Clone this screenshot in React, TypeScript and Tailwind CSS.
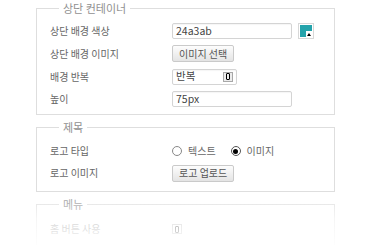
import type { ReactNode } from 'react'

const font = "font-['Noto_Sans_CJK_KR','Noto_Sans',sans-serif]"

function Group({ title, children, className = '' }: { title: string; children: ReactNode; className?: string }) {
  return (
    <fieldset className={`border border-[#dedede] pl-[13px] pr-[10px] ${className}`}>
      <legend className="ml-[9px] px-[4px] text-[11px] leading-[14px] text-[#909090]">{title}</legend>
      {children}
    </fieldset>
  )
}

function Row({ label, h, children }: { label: string; h: string; children: ReactNode }) {
  return (
    <div className={`flex items-center ${h}`}>
      <span className="w-[122px] shrink-0 text-[10px] leading-none text-[#666]">{label}</span>
      <div className="flex items-center">{children}</div>
    </div>
  )
}

function Field({ value, w, children }: { value: string; w: string; children?: ReactNode }) {
  return (
    <div
      className={`flex h-[16px] ${w} items-center justify-between rounded-[2px] border border-[#d4d4d4] bg-white pl-[3px] pr-[3px] text-[10.5px] leading-none text-[#444] shadow-[inset_0_1px_1px_rgba(0,0,0,0.04)]`}
    >
      <span>{value}</span>
      {children}
    </div>
  )
}

function Btn({ label }: { label: string }) {
  return (
    <button className="h-[17px] rounded-[2px] border border-[#cacaca] bg-gradient-to-b from-[#fdfdfd] to-[#e4e4e4] px-[6px] text-[10px] leading-none text-[#555]">
      {label}
    </button>
  )
}

// small toggle glyph: grey box with a black rounded bar inside
function Toggle({ faint = false }: { faint?: boolean }) {
  return (
    <span
      className={`flex h-[10px] w-[10px] items-center justify-center border ${
        faint ? 'border-[#aaa] bg-white' : 'border-[#a8a8a8] bg-[#ececec]'
      }`}
    >
      <span className="h-[7px] w-[4px] rounded-[1px] border-[1.5px] border-black" />
    </span>
  )
}

function Radio({ on, label }: { on?: boolean; label: string }) {
  return (
    <span className="flex items-center gap-[6px]">
      <span
        className={`flex h-[10px] w-[10px] items-center justify-center rounded-full border bg-white ${
          on ? 'border-[#555]' : 'border-[#888]'
        }`}
      >
        {on && <span className="h-[5px] w-[5px] rounded-full bg-black" />}
      </span>
      <span className="text-[10px] leading-none text-[#666]">{label}</span>
    </span>
  )
}

export default function App() {
  return (
    <div className={`relative h-[245px] w-[370px] overflow-hidden bg-white ${font}`}>
      <div className="ml-[36px] flex w-[299px] flex-col gap-[5px] pt-[1px]">
        <Group title="상단 컨테이너" className="pb-[7px] pt-[8px]">
          <div className="flex flex-col gap-[6px]">
            <Row label="상단 배경 색상" h="h-[16px]">
              <Field value="24a3ab" w="w-[120px]" />
              <span className="relative ml-[6px] block h-[16px] w-[16px] border border-[#d8d8d8] bg-white p-[1px]">
                <span className="block h-full w-full bg-[#24a3ab]" />
                <span className="absolute bottom-[1px] right-[1px] flex h-[6px] w-[6px] items-end justify-center bg-white">
                  <span className="mb-[1px] h-0 w-0 border-x-[2px] border-b-[3px] border-x-transparent border-b-black" />
                </span>
              </span>
            </Row>
            <Row label="상단 배경 이미지" h="h-[17px]">
              <Btn label="이미지 선택" />
            </Row>
            <Row label="배경 반복" h="h-[17px]">
              <Field value="반복" w="w-[65px]">
                <Toggle />
              </Field>
            </Row>
            <Row label="높이" h="h-[16px]">
              <Field value="75px" w="w-[120px]" />
            </Row>
          </div>
        </Group>

        <Group title="제목" className="pb-[10px] pt-[10px]">
          <div className="flex flex-col gap-[7px]">
            <Row label="로고 타입" h="h-[14px]">
              <div className="flex items-center gap-[15px]">
                <Radio label="텍스트" />
                <Radio on label="이미지" />
              </div>
            </Row>
            <Row label="로고 이미지" h="h-[16px]">
              <Btn label="로고 업로드" />
            </Row>
          </div>
        </Group>

        <Group title="메뉴" className="pb-[20px] pt-[11px]">
          <Row label="홈 버튼 사용" h="h-[14px]">
            <Toggle faint />
          </Row>
        </Group>
      </div>

      {/* the lower part of the panel fades out */}
      <div className="pointer-events-none absolute inset-x-0 bottom-0 h-[53px] bg-gradient-to-b from-white/0 via-white/70 to-white/95" />
    </div>
  )
}
